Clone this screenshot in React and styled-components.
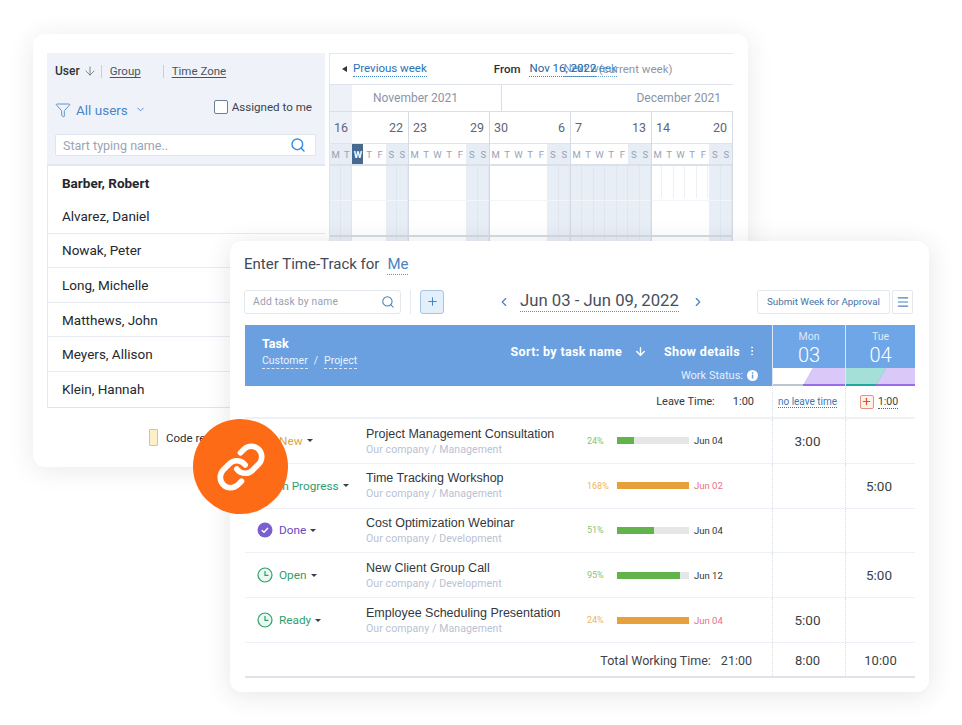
import React from "react";
import styled, { createGlobalStyle } from "styled-components";
import { ArrowDown, ChevronDown, ChevronLeft, ChevronRight, EllipsisVertical, Funnel, Link, Menu, Plus, Search } from "lucide-react";

const USERS = ["Alvarez, Daniel", "Nowak, Peter", "Long, Michelle", "Matthews, John", "Meyers, Allison", "Klein, Hannah"];
const LETTERS = ["M", "T", "W", "T", "F", "S", "S"];

const WEEKS = [
  { from: "16", to: "22", width: 80, head: [1, 1, 0, 0, 0, 1, 1], body: [1, 1, 0, 0, 0, 1, 1], today: 2 },
  { from: "23", to: "29", width: 81, head: [0, 0, 0, 0, 0, 1, 1], body: [0, 0, 0, 0, 0, 1, 1] },
  { from: "30", to: "6", width: 81, head: [0, 0, 0, 0, 0, 1, 1], body: [0, 0, 0, 0, 0, 1, 1] },
  { from: "7", to: "13", width: 81, head: [0, 0, 0, 0, 0, 1, 1], body: [1, 1, 1, 1, 1, 1, 1] },
  { from: "14", to: "20", width: 81, head: [0, 0, 0, 0, 0, 1, 1], body: [0, 0, 0, 0, 0, 1, 1], ticks: true },
];

const TASKS = [
  { status: "New", color: "#d8a63c", icon: "clock", title: "Project Management Consultation", sub: "Our company / Management", pct: "24%", fill: 24, bar: "#62b34c", pctColor: "#86c473", due: "Jun 04", mon: "3:00" },
  { status: "In Progress", color: "#2f9e6e", icon: "clock", title: "Time Tracking Workshop", sub: "Our company / Management", pct: "168%", fill: 100, bar: "#e8a03a", pctColor: "#eeb565", due: "Jun 02", late: true, tue: "5:00" },
  { status: "Done", color: "#6a49bd", icon: "done", title: "Cost Optimization Webinar", sub: "Our company / Development", pct: "51%", fill: 51, bar: "#62b34c", pctColor: "#86c473", due: "Jun 04" },
  { status: "Open", color: "#2f9e6e", icon: "clock", title: "New Client Group Call", sub: "Our company / Development", pct: "95%", fill: 88, bar: "#62b34c", pctColor: "#86c473", due: "Jun 12", tue: "5:00" },
  { status: "Ready", color: "#2f9e6e", icon: "clock", title: "Employee Scheduling Presentation", sub: "Our company / Management", pct: "24%", fill: 100, bar: "#e8a03a", pctColor: "#eeb565", due: "Jun 04", late: true, mon: "5:00" },
];

const GlobalStyle = createGlobalStyle`
  html, body {
    margin: 0;
    padding: 0;
    background: #ffffff;
  }
  body {
    font-family: Roboto, "Liberation Sans", sans-serif;
    color: #2b2f36;
  }
  * {
    box-sizing: border-box;
  }
`;

const Page = styled.div`
  position: relative;
  width: 962px;
  height: 725px;
  padding: 34px 0 0 33px;
  overflow: hidden;
`;

// back card: users + calendar

const BackCard = styled.div`
  display: flex;
  flex-direction: column;
  width: 715px;
  height: 433px;
  padding: 19px 16px 0 14px;
  border-radius: 12px;
  background: #ffffff;
  box-shadow: 0 3px 26px rgba(30, 40, 60, 0.1);
`;

const BackColumns = styled.div`
  display: flex;
  gap: 4px;
  height: 355px;
`;

const UsersPanel = styled.div`
  width: 278px;
  flex-shrink: 0;
`;

const UsersFilter = styled.div`
  height: 113px;
  padding: 0 9px 0 8px;
  background: #eff3f9;
  border-bottom: 2px solid #e3e8f0;
`;

const SortRow = styled.div`
  display: flex;
  align-items: center;
  height: 36px;
  font-size: 11.5px;
`;

const SortActive = styled.span`
  font-size: 12px;
  font-weight: 500;
  color: #30343b;
`;

const SortDivider = styled.i`
  width: 1px;
  height: 13px;
  background: #c6cedb;
  margin: ${(p) => p.$margin};
`;

const SortLink = styled.span`
  color: #4b5361;
  text-decoration: underline;
  text-underline-offset: 2px;
`;

const FilterRow = styled.div`
  display: flex;
  align-items: center;
  height: 29px;
  margin-top: 6px;
  white-space: nowrap;
`;

const AllUsers = styled.span`
  margin-left: 5px;
  font-size: 13.5px;
  color: #4a86c8;
`;

const AssignedBox = styled.span`
  width: 14px;
  height: 14px;
  margin-left: auto;
  margin-top: -5px;
  border: 1.5px solid #6c7f99;
  border-radius: 2px;
  background: #ffffff;
`;

const AssignedLabel = styled.span`
  margin: -5px 4px 0 4px;
  font-size: 11.6px;
  color: #3c424c;
`;

const NameInput = styled.div`
  display: flex;
  align-items: center;
  justify-content: space-between;
  height: 22px;
  margin-top: 10px;
  padding: 0 9px 0 7px;
  background: #ffffff;
  border: 1px solid #dfe5ee;
  border-radius: 2px;
  font-size: 12.5px;
  color: #9aa4b6;
`;

const UserList = styled.div`
  border-left: 1px solid #e6eaf0;
  border-bottom: 1px solid #dfe4ec;
`;

const UserRow = styled.div`
  display: flex;
  align-items: center;
  height: ${(p) => (p.$first ? "33px" : "34.6px")};
  padding-left: 14px;
  font-size: 13.5px;
  font-weight: ${(p) => (p.$first ? 700 : 400)};
  color: #24282e;
  border-bottom: ${(p) => (p.$first ? "none" : "1px solid #e8ebf1")};

  &:last-child {
    border-bottom: none;
  }
`;

const CalendarPanel = styled.div`
  width: 404px;
  flex-shrink: 0;
  overflow: hidden;
`;

const WeekNav = styled.div`
  display: flex;
  align-items: center;
  height: 31px;
  padding-left: 12px;
  border-top: 1px solid #e3e7ee;
  border-left: 1px solid #e3e7ee;
  font-size: 11.5px;
`;

const PrevMark = styled.span`
  width: 0;
  height: 0;
  margin-right: 6px;
  border-top: 3px solid transparent;
  border-bottom: 3px solid transparent;
  border-right: 5px solid #30343b;
`;

const NavLink = styled.span`
  color: ${(p) => p.$color || "#2a72b5"};
  border-bottom: 1px dotted #3f82c2;
  padding-bottom: 1px;
  white-space: nowrap;
  margin-left: ${(p) => p.$left || 0};
  opacity: ${(p) => p.$fade || 1};
`;

const FromLabel = styled.span`
  margin: 0 9px 0 67px;
  color: #2b2f36;
  font-weight: 500;
`;

const CurrentWeek = styled.span`
  margin-left: -18px;
  color: #8d97a8;
  white-space: nowrap;
`;

const MonthRow = styled.div`
  display: flex;
  height: 28px;
  border-top: 1px solid #dfe4ec;
  border-bottom: 1px solid #d9dfe9;
  font-size: 12px;
  color: #8a94a6;
`;

const MonthLead = styled.div`
  width: 23px;
  background: #eef2f8;
  border-left: 1px solid #dfe4ec;
`;

const MonthCell = styled.div`
  display: flex;
  align-items: center;
  width: ${(p) => p.$width}px;
  padding: ${(p) => p.$padding};
  justify-content: ${(p) => p.$justify};
  border-right: ${(p) => (p.$divider ? "1.5px solid #d9dfe9" : "none")};
`;

const WeekGrid = styled.div`
  display: flex;
`;

const WeekColumn = styled.div`
  width: ${(p) => p.$width}px;
  flex-shrink: 0;
  border-right: 1px solid #d5dbe5;

  &:first-child {
    border-left: 1px solid #dfe4ec;
  }
`;

const WeekDates = styled.div`
  position: relative;
  display: flex;
  justify-content: space-between;
  align-items: center;
  height: 31px;
  padding: 0 5px 0 4px;
  font-size: 12.5px;
  color: #5d6778;
`;

const DateShade = styled.div`
  position: absolute;
  z-index: 0;
  left: 0;
  top: 0;
  bottom: 0;
  width: 22px;
  background: #eef2f8;
`;

const DateNumber = styled.span`
  position: relative;
  z-index: 1;
`;

const DayLetters = styled.div`
  display: grid;
  grid-template-columns: repeat(7, 1fr);
  height: 23px;
  border-top: 1px solid #dfe4ec;
  border-bottom: 2px solid #dbe1ea;
`;

const DayLetter = styled.div`
  display: flex;
  align-items: center;
  justify-content: center;
  font-size: 9.5px;
  font-weight: ${(p) => (p.$today ? 700 : 400)};
  color: ${(p) => (p.$today ? "#ffffff" : "#98a2b4")};
  background: ${(p) => (p.$today ? "#47688f" : p.$shade ? "#e7edf5" : "#ffffff")};
`;

const DayBody = styled.div`
  display: grid;
  grid-template-columns: repeat(7, 1fr);
  height: 190px;
`;

const DaySlot = styled.div`
  background: ${(p) => (p.$shade ? "#e8eef6" : "#ffffff")};
  border-right: 1px solid ${(p) => (p.$shade ? "#dfe6f0" : "transparent")};
  ${(p) => p.$tick && "background: linear-gradient(#eceff3, #eceff3) right top / 1px 32px no-repeat;"}
`;

const BodyFrame = styled.div`
  position: relative;
`;

const BodyLine = styled.div`
  position: absolute;
  left: 0;
  right: 0;
  top: ${(p) => p.$top}px;
  height: ${(p) => p.$height}px;
  background: ${(p) => p.$color};
`;

const BackFooter = styled.div`
  display: flex;
  align-items: center;
  margin: 21px 0 0 102px;
  font-size: 11.5px;
  color: #2b2f36;
`;

const CodeSwatch = styled.span`
  width: 9px;
  height: 17px;
  margin-right: 8px;
  background: #fdf0c8;
  border: 1.5px solid #f2c53d;
  border-radius: 1px;
`;

// front card: time track

const FrontCard = styled.div`
  position: absolute;
  left: 230px;
  top: 241px;
  width: 699px;
  height: 451px;
  padding: 14px 14px 0;
  border-radius: 12px;
  background: #ffffff;
  box-shadow: 0 3px 26px rgba(30, 40, 60, 0.12);
`;

const TitleRow = styled.div`
  display: flex;
  align-items: baseline;
  height: 20px;
  font-size: 15px;
  color: #414a58;
`;

const MeLink = styled.span`
  margin-left: 8px;
  color: #4a82c0;
  border-bottom: 1px dotted #6d8fb8;
  padding-bottom: 1px;
`;

const Toolbar = styled.div`
  display: flex;
  align-items: center;
  height: 25px;
  margin-top: 14px;
`;

const TaskInput = styled.div`
  display: flex;
  align-items: center;
  justify-content: space-between;
  width: 157px;
  height: 24px;
  padding: 0 5px 0 8px;
  border: 1px solid #e3e7ee;
  border-radius: 3px;
  font-size: 10.3px;
  letter-spacing: 0.2px;
  color: #98a1b1;
`;

const ToolDivider = styled.i`
  width: 1px;
  height: 24px;
  margin: 0 9px;
  background: #e6e9ef;
`;

const AddButton = styled.div`
  display: flex;
  align-items: center;
  justify-content: center;
  width: 24px;
  height: 24px;
  background: #e3effb;
  border: 1px solid #a9c4e2;
  border-radius: 3px;
`;

const WeekSwitch = styled.div`
  display: flex;
  align-items: center;
  width: 313px;
  padding-left: 53px;
`;

const WeekRange = styled.span`
  margin: 0 12px 0 9px;
  font-size: 16.7px;
  color: #46505e;
  white-space: nowrap;
  border-bottom: 1px dotted #7f8896;
  line-height: 20px;
`;

const SubmitButton = styled.div`
  display: flex;
  align-items: center;
  justify-content: center;
  width: 133px;
  height: 24px;
  border: 1px solid #e3e7ee;
  border-radius: 2px;
  font-size: 9.8px;
  color: #3f74ac;
`;

const MenuButton = styled.div`
  display: flex;
  align-items: center;
  justify-content: center;
  width: 21px;
  height: 24px;
  margin-left: 2px;
  border: 1px solid #e3e7ee;
  border-radius: 2px;
`;

const TableHeader = styled.div`
  display: flex;
  width: 670px;
  height: 61px;
  margin: 11px 0 0 1px;
  color: #ffffff;
`;

const TaskHead = styled.div`
  display: flex;
  justify-content: space-between;
  width: 527px;
  padding: 11px 14px 0 17px;
  background: #6a9fe0;
`;

const TaskHeadTitle = styled.div`
  font-size: 12.5px;
  font-weight: 700;
  line-height: 15px;
`;

const TaskHeadLinks = styled.div`
  display: flex;
  gap: 6px;
  margin-top: 3px;
  font-size: 10.5px;
  color: #eaf2fb;
`;

const HeadLink = styled.span`
  border-bottom: 1px dashed #dbe8f8;
  padding-bottom: 1px;
`;

const HeadControls = styled.div`
  display: flex;
  flex-direction: column;
  align-items: flex-end;
`;

const HeadSort = styled.div`
  display: flex;
  align-items: center;
  height: 30px;
  font-size: 12.5px;
  font-weight: 700;
  letter-spacing: 0.35px;
  white-space: nowrap;
`;

const SortArrow = styled.span`
  display: flex;
  margin: 0 17px 0 12px;
`;

const DotsIcon = styled.span`
  display: flex;
  margin: 0 0 0 6px;
`;

const WorkStatus = styled.div`
  display: flex;
  align-items: center;
  gap: 4px;
  margin-top: 3px;
  font-size: 11px;
  color: #e6f0fb;
`;

const DayHead = styled.div`
  display: flex;
  flex-direction: column;
  width: ${(p) => p.$width}px;
  background: #6ea6e8;
  border-left: 1px solid #dbe7f5;
  text-align: center;
`;

const DayName = styled.div`
  margin-top: 6px;
  font-size: 10.5px;
  line-height: 12px;
  color: #dfeafa;
`;

const DayNumber = styled.div`
  font-size: 20px;
  font-weight: 300;
  line-height: 25px;
`;

const DayBand = styled.svg`
  display: block;
  margin-top: auto;
`;

const TableRow = styled.div`
  display: grid;
  grid-template-columns: 121px 221px 185px 73px 70px;
  width: 670px;
  height: ${(p) => p.$height}px;
  margin-left: 1px;
  border-bottom: ${(p) => p.$line || "1px solid #edf0f6"};
`;

const LeaveLabel = styled.div`
  grid-column: 1 / span 3;
  display: flex;
  align-items: center;
  justify-content: flex-end;
  padding-right: 18px;
  font-size: 11px;
  color: #333841;
`;

const LeaveValue = styled.span`
  margin-left: 18px;
`;

const DayCell = styled.div`
  display: flex;
  align-items: center;
  justify-content: center;
  padding-right: ${(p) => (p.$flush ? 0 : 3)}px;
  font-size: ${(p) => p.$size || 13.5}px;
  color: #3a3f47;
  border-left: 1px dotted #d8dde6;
`;

const NoLeave = styled.span`
  font-size: 10px;
  color: #3a78b8;
  border-bottom: 1px dotted #3a78b8;
`;

const LeaveAdd = styled.span`
  display: flex;
  align-items: center;
  justify-content: center;
  width: 14px;
  height: 14px;
  margin-right: 4px;
  background: #fdf1ec;
  border: 1px solid #e4957c;
  border-radius: 2px;
`;

const LeaveTime = styled.span`
  font-size: 10.5px;
  border-bottom: 1px dotted #5a606a;
`;

const StatusCell = styled.div`
  display: flex;
  align-items: center;
  padding-left: 12px;
  font-size: 11.8px;
  color: ${(p) => p.$color};
`;

const StatusLabel = styled.span`
  margin-left: 6px;
`;

const Caret = styled.i`
  width: 0;
  height: 0;
  margin-left: 4px;
  border-left: 3px solid transparent;
  border-right: 3px solid transparent;
  border-top: 3px solid #3a3f47;
`;

const TaskCell = styled.div`
  padding-top: 6.5px;
`;

const TaskTitle = styled.div`
  font-family: "Liberation Sans", Arial, sans-serif;
  font-size: 12.5px;
  line-height: 16px;
  color: #33373e;
  white-space: nowrap;
`;

const TaskSub = styled.div`
  margin-top: 1px;
  font-size: 10.5px;
  line-height: 14px;
  letter-spacing: 0.1px;
  color: #b9c1d4;
`;

const ProgressCell = styled.div`
  display: flex;
  align-items: center;
  font-size: 9px;
`;

const ProgressPct = styled.span`
  width: 30px;
  color: ${(p) => p.$color};
`;

const ProgressTrack = styled.div`
  width: 72px;
  height: 7px;
  background: #e6e6e6;
`;

const ProgressFill = styled.div`
  height: 100%;
  background: ${(p) => p.$color};
`;

const ProgressDue = styled.span`
  margin-left: 5px;
  font-size: 9.5px;
  color: ${(p) => (p.$late ? "#e8708a" : "#30343b")};
`;

const TotalLabel = styled.div`
  grid-column: 1 / span 3;
  display: flex;
  align-items: center;
  justify-content: flex-end;
  padding: 2px 20px 0 0;
  font-size: 12.5px;
  color: #3d434d;
`;

const TotalValue = styled.span`
  margin-left: 10px;
`;

const TotalCell = styled(DayCell)`
  padding-top: 2px;
`;

const LinkBadge = styled.div`
  position: absolute;
  left: 193px;
  top: 419px;
  display: flex;
  align-items: center;
  justify-content: center;
  width: 95px;
  height: 95px;
  border-radius: 50%;
  background: #fd6b16;
  color: #ffffff;
`;

const ClockIcon = ({ color }) => (
  <svg width="16" height="16" viewBox="0 0 16 16" fill="#eaf8f1" stroke={color} strokeWidth="1.2">
    <circle cx="8" cy="8" r="7" />
    <path d="M8 4v4.4h3.4" fill="none" />
  </svg>
);

const DoneIcon = () => (
  <svg width="16" height="16" viewBox="0 0 16 16">
    <circle cx="8" cy="8" r="7.5" fill="#7b5fd0" />
    <path d="M4.8 8.2l2.2 2.1 4-4.4" fill="none" stroke="#ffffff" strokeWidth="1.5" />
  </svg>
);

const InfoIcon = () => (
  <svg width="11" height="11" viewBox="0 0 11 11">
    <circle cx="5.5" cy="5.5" r="5.5" fill="#ffffff" />
    <rect x="4.8" y="4.6" width="1.5" height="3.9" fill="#6a9fe0" />
    <rect x="4.8" y="2.4" width="1.5" height="1.5" fill="#6a9fe0" />
  </svg>
);

const MonBand = () => (
  <DayBand width="72" height="18" viewBox="0 0 72 18">
    <path d="M0 0H40L31 16H0Z" fill="#ffffff" />
    <path d="M40 0H72V16H31Z" fill="#d9c8f8" />
    <rect x="0" y="16" width="31" height="2" fill="#bcc6d2" />
    <rect x="30" y="16" width="42" height="2" fill="#9a6ce8" />
  </DayBand>
);

const TueBand = () => (
  <DayBand width="69" height="18" viewBox="0 0 69 18">
    <path d="M0 0H40L31 16H0Z" fill="#a4dfd8" />
    <path d="M40 0H69V16H31Z" fill="#d9c8f8" />
    <rect x="0" y="16" width="31" height="2" fill="#1fa8a0" />
    <rect x="30" y="16" width="39" height="2" fill="#9a6ce8" />
  </DayBand>
);

const App = () => (
  <Page>
    <GlobalStyle />
    <BackCard>
      <BackColumns>
        <UsersPanel>
          <UsersFilter>
            <SortRow>
              <SortActive>User</SortActive>
              <ArrowDown size={14} color="#6b7688" strokeWidth={1.5} style={{ marginLeft: 3 }} />
              <SortDivider $margin="0 8px 0 4px" />
              <SortLink>Group</SortLink>
              <SortDivider $margin="0 8px 0 22px" />
              <SortLink>Time Zone</SortLink>
            </SortRow>
            <FilterRow>
              <Funnel size={16} color="#4a86c8" strokeWidth={1.3} />
              <AllUsers>All users</AllUsers>
              <ChevronDown size={11} color="#4a86c8" style={{ marginLeft: 7 }} />
              <AssignedBox />
              <AssignedLabel>Assigned to me</AssignedLabel>
            </FilterRow>
            <NameInput>
              Start typing name..
              <Search size={16} color="#3d8fe0" strokeWidth={2.2} />
            </NameInput>
          </UsersFilter>
          <UserList>
            <UserRow $first>Barber, Robert</UserRow>
            {USERS.map((name) => (
              <UserRow key={name}>{name}</UserRow>
            ))}
          </UserList>
        </UsersPanel>
        <CalendarPanel>
          <WeekNav>
            <PrevMark />
            <NavLink>Previous week</NavLink>
            <FromLabel>From</FromLabel>
            <NavLink $color="#22659f">Nov 16, 2022</NavLink>
            <NavLink $left="-33px" $fade="0.75">Next week</NavLink>
            <CurrentWeek>(current week)</CurrentWeek>
          </WeekNav>
          <MonthRow>
            <MonthLead />
            <MonthCell $width={150} $padding="0 0 0 21px" $justify="flex-start" $divider>November 2021</MonthCell>
            <MonthCell $width={230} $padding="0 11px 0 0" $justify="flex-end">December 2021</MonthCell>
          </MonthRow>
          <WeekGrid>
            {WEEKS.map((week, w) => (
              <WeekColumn key={week.from} $width={week.width}>
                <WeekDates>
                  {w === 0 && <DateShade />}
                  <DateNumber>{week.from}</DateNumber>
                  <DateNumber>{week.to}</DateNumber>
                </WeekDates>
                <DayLetters>
                  {LETTERS.map((letter, i) => (
                    <DayLetter key={i} $shade={week.head[i]} $today={week.today === i}>
                      {letter}
                    </DayLetter>
                  ))}
                </DayLetters>
                <BodyFrame>
                  <DayBody>
                    {week.body.map((shade, i) => (
                      <DaySlot key={i} $shade={shade} $tick={week.ticks && !shade && i < 5} />
                    ))}
                  </DayBody>
                  <BodyLine $top={34} $height={1} $color="#f1f4f8" />
                  <BodyLine $top={69} $height={2} $color="#d5dae2" />
                </BodyFrame>
              </WeekColumn>
            ))}
          </WeekGrid>
        </CalendarPanel>
      </BackColumns>
      <BackFooter>
        <CodeSwatch />
        Code review
      </BackFooter>
    </BackCard>

    <FrontCard>
      <TitleRow>
        Enter Time-Track for
        <MeLink>Me</MeLink>
      </TitleRow>
      <Toolbar>
        <TaskInput>
          Add task by name
          <Search size={14} color="#4a7fb5" strokeWidth={1.8} />
        </TaskInput>
        <ToolDivider />
        <AddButton>
          <Plus size={13} color="#3f82c8" strokeWidth={1.8} />
        </AddButton>
        <WeekSwitch>
          <ChevronLeft size={14} color="#4a82c0" strokeWidth={2} />
          <WeekRange>Jun 03 - Jun 09, 2022</WeekRange>
          <ChevronRight size={14} color="#4a82c0" strokeWidth={2} />
        </WeekSwitch>
        <SubmitButton>Submit Week for Approval</SubmitButton>
        <MenuButton>
          <Menu size={14} color="#4a82c0" strokeWidth={2} />
        </MenuButton>
      </Toolbar>

      <TableHeader>
        <TaskHead>
          <div>
            <TaskHeadTitle>Task</TaskHeadTitle>
            <TaskHeadLinks>
              <HeadLink>Customer</HeadLink>/<HeadLink>Project</HeadLink>
            </TaskHeadLinks>
          </div>
          <HeadControls>
            <HeadSort>
              Sort: by task name
              <SortArrow>
                <ArrowDown size={13} color="#ffffff" strokeWidth={2.6} />
              </SortArrow>
              Show details
              <DotsIcon>
                <EllipsisVertical size={12} color="#ffffff" strokeWidth={2} />
              </DotsIcon>
            </HeadSort>
            <WorkStatus>
              Work Status:
              <InfoIcon />
            </WorkStatus>
          </HeadControls>
        </TaskHead>
        <DayHead $width={73}>
          <DayName>Mon</DayName>
          <DayNumber>03</DayNumber>
          <MonBand />
        </DayHead>
        <DayHead $width={70}>
          <DayName>Tue</DayName>
          <DayNumber>04</DayNumber>
          <TueBand />
        </DayHead>
      </TableHeader>

      <TableRow $height={33} $line="2px solid #eef1f6">
        <LeaveLabel>
          Leave Time:
          <LeaveValue>1:00</LeaveValue>
        </LeaveLabel>
        <DayCell>
          <NoLeave>no leave time</NoLeave>
        </DayCell>
        <DayCell>
          <LeaveAdd>
            <Plus size={11} color="#d9542f" strokeWidth={2.6} />
          </LeaveAdd>
          <LeaveTime>1:00</LeaveTime>
        </DayCell>
      </TableRow>

      {TASKS.map((task) => (
        <TableRow key={task.title} $height={44.8}>
          <StatusCell $color={task.color}>
            {task.icon === "done" ? <DoneIcon /> : <ClockIcon color={task.color} />}
            <StatusLabel>{task.status}</StatusLabel>
            <Caret />
          </StatusCell>
          <TaskCell>
            <TaskTitle>{task.title}</TaskTitle>
            <TaskSub>{task.sub}</TaskSub>
          </TaskCell>
          <ProgressCell>
            <ProgressPct $color={task.pctColor}>{task.pct}</ProgressPct>
            <ProgressTrack>
              <ProgressFill $color={task.bar} style={{ width: `${task.fill}%` }} />
            </ProgressTrack>
            <ProgressDue $late={task.late}>{task.due}</ProgressDue>
          </ProgressCell>
          <DayCell>{task.mon}</DayCell>
          <DayCell>{task.tue}</DayCell>
        </TableRow>
      ))}

      <TableRow $height={35} $line="2px solid #dfe4ea">
        <TotalLabel>
          Total Working Time:
          <TotalValue>21:00</TotalValue>
        </TotalLabel>
        <TotalCell $size={13}>8:00</TotalCell>
        <TotalCell $size={13} $flush>10:00</TotalCell>
      </TableRow>
    </FrontCard>

    <LinkBadge>
      <Link size={50} strokeWidth={2.7} />
    </LinkBadge>
  </Page>
);

export default App;
